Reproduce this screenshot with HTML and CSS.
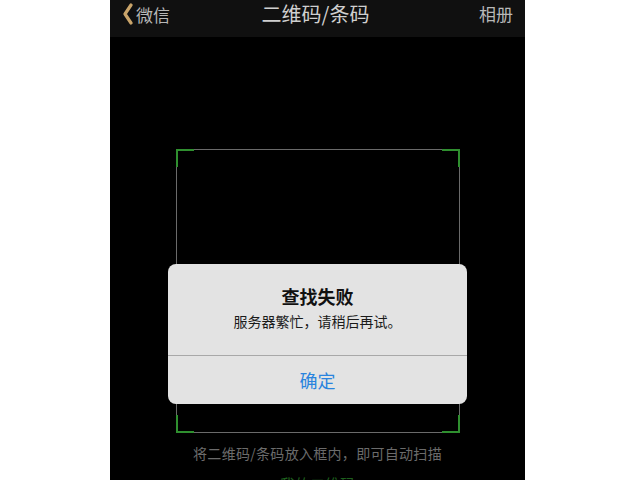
FILE: index.html
```html
<!DOCTYPE html>
<html lang="zh">
<head>
<meta charset="utf-8">
<link rel="stylesheet" href="styles.css">
</head>
<body>
<div class="phone">
  <div class="nav">
    <div class="nav-left">
      <svg class="back" width="12" height="22" viewBox="0 0 12 22">
        <path d="M9 2 L3 11 L9 20" fill="none" stroke="#c9a46a" stroke-width="3.2" stroke-linecap="round" stroke-linejoin="round"/>
      </svg>
      <span>微信</span>
    </div>
    <div class="nav-title">二维码/条码</div>
    <div class="nav-right">相册</div>
  </div>
  <div class="scan">
    <div class="frame">
      <span class="corner tl"></span>
      <span class="corner tr"></span>
      <span class="corner bl"></span>
      <span class="corner br"></span>
    </div>
    <div class="hint">将二维码/条码放入框内，即可自动扫描</div>
    <div class="mine">我的二维码</div>
  </div>
  <div class="alert">
    <div class="alert-body">
      <div class="alert-title">查找失败</div>
      <div class="alert-msg">服务器繁忙，请稍后再试。</div>
    </div>
    <div class="alert-btn">确定</div>
  </div>
</div>
</body>
</html>
```
FILE: styles.css
```css
html, body {
  margin: 0;
  padding: 0;
  background: #ffffff;
  font-family: "Noto Sans CJK SC", "Noto Sans", sans-serif;
}
.phone {
  position: relative;
  width: 415px;
  height: 480px;
  margin-left: 110px;
  background: #000;
  overflow: hidden;
}
.nav {
  height: 37px;
  background: #101010;
  display: flex;
  align-items: flex-start;
  justify-content: space-between;
  padding: 0 12px 0 12px;
  box-sizing: border-box;
}
.nav-left {
  display: flex;
  align-items: center;
  height: 28px;
  color: #b8b8b8;
  font-size: 17px;
  gap: 2px;
}
.back {
  display: block;
}
.nav-title {
  height: 28px;
  line-height: 28px;
  color: #cfcfcf;
  font-size: 20px;
  margin-left: -18px;
}
.nav-right {
  height: 28px;
  line-height: 28px;
  color: #b8b8b8;
  font-size: 17px;
}
.scan {
  display: flex;
  flex-direction: column;
  align-items: center;
  padding-top: 112px;
}
.frame {
  position: relative;
  width: 284px;
  height: 284px;
  box-sizing: border-box;
  border: 1px solid #6a6a6a;
}
.corner {
  position: absolute;
  width: 16px;
  height: 16px;
  border-color: #2f8f2f;
  border-style: solid;
  border-width: 0;
}
.corner.tl { left: -1px; top: -1px; border-left-width: 2px; border-top-width: 2px; }
.corner.tr { right: -1px; top: -1px; border-right-width: 2px; border-top-width: 2px; }
.corner.bl { left: -1px; bottom: -1px; border-left-width: 2px; border-bottom-width: 2px; }
.corner.br { right: -1px; bottom: -1px; border-right-width: 2px; border-bottom-width: 2px; }
.hint {
  margin-top: 10px;
  font-size: 14px;
  line-height: 20px;
  letter-spacing: 0.3px;
  color: #6b6b6b;
}
.mine {
  margin-top: 11px;
  font-size: 15px;
  line-height: 20px;
  color: #1d5f1d;
}
.alert {
  position: absolute;
  left: 58px;
  top: 264px;
  width: 299px;
  height: 140px;
  background: #e3e3e3;
  border-radius: 8px;
  display: flex;
  flex-direction: column;
  overflow: hidden;
}
.alert-body {
  height: 92px;
  box-sizing: border-box;
  border-bottom: 1px solid #a8a8a8;
  display: flex;
  flex-direction: column;
  align-items: center;
  padding-top: 20px;
}
.alert-title {
  font-size: 18px;
  line-height: 24px;
  font-weight: 700;
  color: #111;
}
.alert-msg {
  margin-top: 3px;
  font-size: 14px;
  line-height: 20px;
  color: #1a1a1a;
}
.alert-btn {
  flex: 1;
  display: flex;
  align-items: center;
  justify-content: center;
  font-size: 18px;
  color: #2a84de;
}
```
